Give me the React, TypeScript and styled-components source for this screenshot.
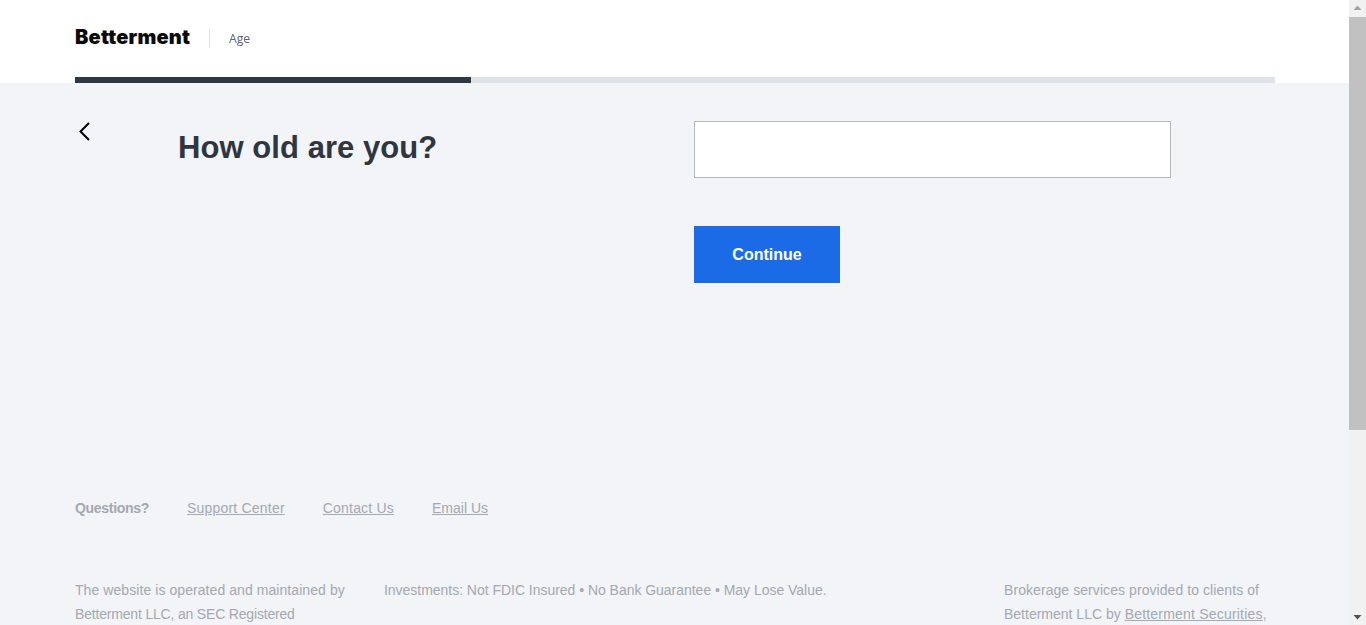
import React from "react";
import styled, { createGlobalStyle } from "styled-components";

const GlobalStyle = createGlobalStyle`
  html, body {
    margin: 0;
    padding: 0;
    height: 100%;
    overflow: hidden;
    background: #f2f4f8;
    font-family: "Liberation Sans", Arial, sans-serif;
  }
`;

const App: React.FC = () => {
  return (
    <Layout>
      <GlobalStyle />
      <Page>
        <Masthead>
          <Header>
            <Logo>Betterment</Logo>
            <Divider />
            <StepName>Age</StepName>
          </Header>
          <ProgressTrack>
            <ProgressFill style={{ width: `${(396 / 1200) * 100}%` }} />
          </ProgressTrack>
        </Masthead>
        <Content>
          <BackButton aria-label="Back">
            <svg width="20" height="20" viewBox="0 0 20 20" fill="none">
              <path d="M14 2 L5.5 10.5 L14 19" stroke="#000" strokeWidth="2" />
            </svg>
          </BackButton>
          <Question>How old are you?</Question>
          <FormColumn>
            <AgeInput type="text" />
            <ContinueButton>Continue</ContinueButton>
          </FormColumn>
        </Content>
        <Footer>
          <HelpRow>
            <HelpLabel>Questions?</HelpLabel>
            <FooterLink href="#">Support Center</FooterLink>
            <FooterLink href="#">Contact Us</FooterLink>
            <FooterLink href="#" $tight>
              Email Us
            </FooterLink>
          </HelpRow>
          <LegalRow>
            <LegalLeft>
              The website is operated and maintained by Betterment LLC, an SEC Registered
            </LegalLeft>
            <LegalMiddle>
              Investments: Not FDIC Insured • No Bank Guarantee • May Lose Value.
            </LegalMiddle>
            <LegalRight>
              Brokerage services provided to clients of Betterment LLC by{" "}
              <FooterLink href="#">Betterment Securities</FooterLink>,
            </LegalRight>
          </LegalRow>
        </Footer>
      </Page>
      <Scrollbar>
        <ScrollArrow viewBox="0 0 17 17">
          <path d="M8.5 5.5 L12.5 10 L4.5 10 Z" fill="#a3a3a3" />
        </ScrollArrow>
        <ScrollTrack>
          <ScrollThumb />
        </ScrollTrack>
        <ScrollArrow viewBox="0 0 17 17">
          <path d="M4.5 7 L12.5 7 L8.5 11.5 Z" fill="#505050" />
        </ScrollArrow>
      </Scrollbar>
    </Layout>
  );
};

const Layout = styled.div`
  height: 100vh;
  display: flex;
  overflow: hidden;
`;

const Page = styled.div`
  flex: 1;
  min-width: 0;
  overflow: hidden;
  background: #f2f4f8;
`;

const Masthead = styled.div`
  background: #fff;
  padding: 0 75px;
`;

const Header = styled.div`
  height: 77px;
  display: flex;
  align-items: center;
`;

const Logo = styled.span`
  font-family: Inter, sans-serif;
  font-size: 20px;
  font-weight: 900;
  letter-spacing: 0.2px;
  color: #0b0b0b;
  width: 134px;
  margin-top: -4px;
  line-height: 20px;
`;

const Divider = styled.span`
  width: 1px;
  height: 19px;
  background: #dfe2e8;
`;

const StepName = styled.span`
  font-family: "Open Sans", sans-serif;
  font-size: 12.2px;
  color: #5c6080;
  margin-left: 19px;
`;

const ProgressTrack = styled.div`
  height: 6px;
  width: 1200px;
  background: #e0e2ea;
`;

const ProgressFill = styled.div`
  height: 100%;
  background: #2f3742;
`;

const Content = styled.div`
  height: 415px;
  width: 1200px;
  margin-left: 75px;
  display: flex;
`;

const BackButton = styled.button`
  width: 20px;
  height: 20px;
  margin-top: 38px;
  padding: 0;
  border: 0;
  background: none;
`;

const Question = styled.h1`
  width: 516px;
  margin: 47px 0 0 83px;
  font-size: 31px;
  line-height: 36px;
  font-weight: 700;
  letter-spacing: 0.06px;
  color: #30363f;
`;

const FormColumn = styled.div`
  margin-top: 38px;
  display: flex;
  flex-direction: column;
  align-items: flex-start;
`;

const AgeInput = styled.input`
  width: 477px;
  height: 57px;
  box-sizing: border-box;
  border: 1px solid #b4b8be;
  background: #fff;
  outline: none;
`;

const ContinueButton = styled.button`
  width: 146px;
  height: 57px;
  margin-top: 48px;
  border: 0;
  background: #1c6be6;
  color: #fff;
  font-family: "Liberation Sans", Arial, sans-serif;
  font-size: 16px;
  font-weight: 700;
`;

const Footer = styled.div`
  width: 1200px;
  margin-left: 75px;
  color: #a4a8b0;
  font-size: 14px;
`;

const HelpRow = styled.div`
  display: flex;
  gap: 38px;
  height: 20px;
  line-height: 20px;
`;

const HelpLabel = styled.span`
  font-weight: 700;
  letter-spacing: -0.3px;
`;

const FooterLink = styled.a<{ $tight?: boolean }>`
  color: #a4a8b0;
  text-decoration: underline;
  letter-spacing: ${(p) => (p.$tight ? "0" : "0.2px")};
`;

const LegalRow = styled.div`
  margin-top: 60px;
  display: flex;
  line-height: 24px;
`;

const LegalLeft = styled.div`
  width: 309px;
  padding-right: 30px;
  box-sizing: border-box;
  letter-spacing: -0.18px;

  &::first-line {
    letter-spacing: 0.07px;
  }
`;

const LegalMiddle = styled.div`
  width: 620px;
  letter-spacing: -0.03px;
`;

const LegalRight = styled.div`
  width: 271px;
  letter-spacing: 0;

  &::first-line {
    letter-spacing: 0.07px;
  }
`;

const Scrollbar = styled.div`
  width: 17px;
  flex: none;
  display: flex;
  flex-direction: column;
  background: #f1f1f1;
`;

const ScrollArrow = styled.svg`
  width: 17px;
  height: 17px;
  flex: none;
`;

const ScrollTrack = styled.div`
  flex: 1;
`;

const ScrollThumb = styled.div`
  height: 413px;
  background: #c1c1c1;
`;

export default App;
